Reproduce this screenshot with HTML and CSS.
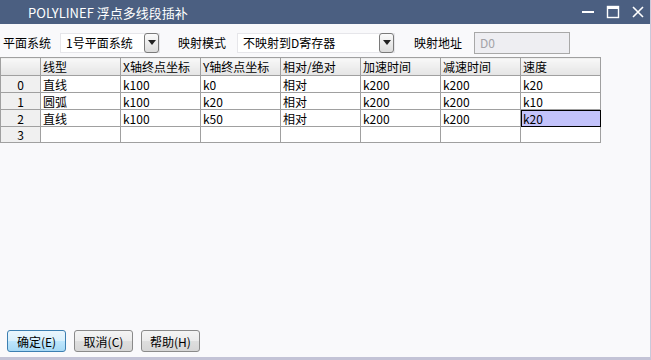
FILE: index.html
```html
<!DOCTYPE html>
<html lang="zh">
<head>
<meta charset="utf-8">
<link rel="stylesheet" href="styles.css">
</head>
<body>
<div class="window">
  <div class="titlebar">
    <span class="title">POLYLINEF 浮点多线段插补</span>
    <div class="controls">
      <svg class="ctl" width="14" height="14" viewBox="0 0 14 14"><rect x="1" y="6" width="12" height="2" fill="#fff"/></svg>
      <svg class="ctl" width="14" height="14" viewBox="0 0 14 14"><rect x="1.5" y="1.5" width="11" height="11" fill="none" stroke="#fff" stroke-width="1.4"/><rect x="1" y="1" width="12" height="3" fill="#fff"/></svg>
      <svg class="ctl" width="14" height="14" viewBox="0 0 14 14"><path d="M2 2 L12 12 M12 2 L2 12" stroke="#fff" stroke-width="1.6"/></svg>
    </div>
  </div>
  <div class="content">
    <div class="toolbar">
      <span class="label l1">平面系统</span>
      <div class="combo c1"><span class="val">1号平面系统</span><span class="drop"><svg width="8" height="5" viewBox="0 0 8 5"><path d="M0 0 H8 L4 5 Z" fill="#222"/></svg></span></div>
      <span class="label l2">映射模式</span>
      <div class="combo c2"><span class="val">不映射到D寄存器</span><span class="drop"><svg width="8" height="5" viewBox="0 0 8 5"><path d="M0 0 H8 L4 5 Z" fill="#222"/></svg></span></div>
      <span class="label l3">映射地址</span>
      <div class="addr">D0</div>
    </div>
    <table class="grid">
      <colgroup><col class="rh"><col class="dc"><col class="dc"><col class="dc"><col class="dc"><col class="dc"><col class="dc"><col class="dc"></colgroup>
      <thead>
        <tr><th></th><th>线型</th><th>X轴终点坐标</th><th>Y轴终点坐标</th><th>相对/绝对</th><th>加速时间</th><th>减速时间</th><th>速度</th></tr>
      </thead>
      <tbody>
        <tr><th>0</th><td>直线</td><td>k100</td><td>k0</td><td>相对</td><td>k200</td><td>k200</td><td>k20</td></tr>
        <tr><th>1</th><td>圆弧</td><td>k100</td><td>k20</td><td>相对</td><td>k200</td><td>k200</td><td>k10</td></tr>
        <tr><th>2</th><td>直线</td><td>k100</td><td>k50</td><td>相对</td><td>k200</td><td>k200</td><td class="sel">k20</td></tr>
        <tr class="last"><th>3</th><td></td><td></td><td></td><td></td><td></td><td></td><td></td></tr>
      </tbody>
    </table>
    <div class="spacer"></div>
    <div class="buttons">
      <button class="btn primary">确定(E)</button>
      <button class="btn">取消(C)</button>
      <button class="btn">帮助(H)</button>
    </div>
  </div>
</div>
</body>
</html>
```
FILE: styles.css
```css
* { box-sizing: border-box; }
html, body { margin: 0; padding: 0; }
body {
  width: 651px; height: 360px; overflow: hidden;
  font-family: "Noto Sans CJK SC", "Noto Sans", sans-serif;
  font-size: 12px; color: #000;
  background: #c3c3d6;
}
.window {
  width: 651px; height: 360px;
  display: flex; flex-direction: column;
  border-right: 1px solid #c9c9da;
  border-bottom: 3px solid #c3c3d6;
}
.titlebar {
  height: 24px; flex: none;
  background: #4b5f81;
  display: flex; align-items: center;
  padding-left: 28px;
  color: #fff;
}
.title { font-size: 13px; }
.controls { margin-left: auto; display: flex; gap: 11px; padding-right: 5px; }
.ctl { display: block; }
.content {
  flex: 1; background: #f9f9fb;
  display: flex; flex-direction: column;
}
.toolbar {
  height: 33px; display: flex; align-items: center;
  padding-top: 4px;
}
.label { white-space: nowrap; line-height: 16px; width: 48px; flex: none; }
.l1 { margin-left: 3px; }
.combo {
  height: 20px; display: flex; align-items: center;
  border: 1px solid #e6e6ea; background: #fff;
  flex: none;
}
.c1 { width: 100px; margin-left: 9px; }
.c2 { width: 158px; margin-left: 11px; }
.l2 { margin-left: 18px; }
.l3 { margin-left: 19px; }
.val { padding-left: 5px; flex: 1; white-space: nowrap; }
.drop {
  width: 15px; height: 20px;
  border: 1px solid #7a7a7a; border-radius: 3px;
  background: linear-gradient(#fbfbfb, #dcdcdc);
  display: flex; align-items: center; justify-content: center;
}
.addr {
  margin-left: 12px; width: 96px; height: 22px; flex: none;
  border: 1px solid #a8a8a8; background: #eeeef2;
  color: #a3a3a8; padding-left: 5px; line-height: 20px;
}
.grid {
  border-collapse: collapse; table-layout: fixed;
  width: 600px;
}
col.rh { width: 40px; }
col.dc { width: 80px; }
.grid th, .grid td {
  border: 1px solid #a0a0a0;
  height: 17px; padding: 0 0 0 2px;
  font-weight: normal; text-align: left;
  white-space: nowrap; overflow: hidden;
  line-height: 15px;
}
.grid thead th {
  background: linear-gradient(#f8f8f8, #e4e4e4);
  height: 18px;
}
.grid tbody th {
  background: #f0f0f0; text-align: center; padding: 0;
}
.grid td { background: #fff; }
.grid tr.last th, .grid tr.last td { height: 16px; }
.grid td.sel {
  background: #c3c3fb;
  outline: 1px solid #000; outline-offset: -1px;
}
.spacer { flex: 1; }
.buttons {
  display: flex; gap: 8px; padding-left: 7px; padding-bottom: 5px;
}
.btn {
  width: 59px; height: 22px; padding: 0;
  font-family: "Noto Sans CJK SC", "Noto Sans", sans-serif;
  font-size: 12px; color: #000;
  border: 1px solid #8a8a8a; border-radius: 3px;
  background: linear-gradient(#f4f4f4 0%, #ebebeb 50%, #dedede 51%, #d6d6d6 100%);
}
.btn.primary {
  border-color: #3c7fb1;
  background: linear-gradient(#eaf6fd 0%, #d9f0fc 50%, #bee6fd 51%, #a7d9f5 100%);
}
```
